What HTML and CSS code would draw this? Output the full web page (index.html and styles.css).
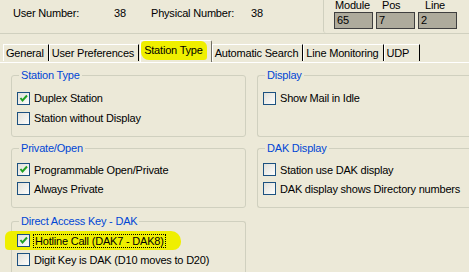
FILE: index.html
```html
<!DOCTYPE html>
<html lang="en">
<head>
    <meta charset="UTF-8">
    <title>Station Type</title>
    <link rel="stylesheet" href="styles.css">
</head>
<body>
    <div class="header">
        <div class="info">
            <span class="lbl-user">User Number:</span>
            <span class="val">38</span>
            <span class="lbl-phys">Physical Number:</span>
            <span>38</span>
        </div>
        <div class="module">
            <div class="mod-col">
                <span class="mod-lbl">Module</span>
                <span class="field">65</span>
            </div>
            <div class="mod-col">
                <span class="mod-lbl pos">Pos</span>
                <span class="field">7</span>
            </div>
            <div class="mod-col">
                <span class="mod-lbl line">Line</span>
                <span class="field">2</span>
            </div>
        </div>
    </div>

    <div class="tabs">
        <div class="tab">General</div>
        <div class="tab">User Preferences</div>
        <div class="tab active"><span class="mark">Station Type</span></div>
        <div class="tab">Automatic Search</div>
        <div class="tab">Line Monitoring</div>
        <div class="tab udp">UDP</div>
    </div>

    <div class="panel">
        <div class="group g1">
            <span class="group-title">Station Type</span>
            <div class="row"><span class="cb checked"><svg viewBox="0 0 11 11"><path d="M2.5 5 L4.5 7.5 L9 2.5"/></svg></span>Duplex Station</div>
            <div class="row"><span class="cb"></span>Station without Display</div>
        </div>
        <div class="group g1 right">
            <span class="group-title">Display</span>
            <div class="row"><span class="cb"></span>Show Mail in Idle</div>
        </div>

        <div class="group g2">
            <span class="group-title">Private/Open</span>
            <div class="row"><span class="cb checked"><svg viewBox="0 0 11 11"><path d="M2.5 5 L4.5 7.5 L9 2.5"/></svg></span>Programmable Open/Private</div>
            <div class="row"><span class="cb"></span>Always Private</div>
        </div>
        <div class="group g2 right">
            <span class="group-title">DAK Display</span>
            <div class="row"><span class="cb"></span>Station use DAK display</div>
            <div class="row"><span class="cb"></span>DAK display shows Directory numbers</div>
        </div>

        <div class="group g3">
            <span class="group-title">Direct Access Key - DAK</span>
            <div class="row hl"><span class="cb checked"><svg viewBox="0 0 11 11"><path d="M2.5 5 L4.5 7.5 L9 2.5"/></svg></span><span class="focus">Hotline Call (DAK7 - DAK8)</span></div>
            <div class="row"><span class="cb"></span>Digit Key is DAK (D10 moves to D20)</div>
        </div>
    </div>
</body>
</html>
```

FILE: styles.css
```css
html, body {
    margin: 0;
    height: 100%;
    overflow: hidden;
}
body {
    background: #ece9d8;
    font-family: "Liberation Sans", Arial, sans-serif;
    font-size: 11px;
    letter-spacing: -0.2px;
    color: #000;
}

/* header strip */
.header {
    display: flex;
    height: 33px;
    border-bottom: 1px solid #d0d0bf;
}
.info {
    display: flex;
    align-items: center;
    height: 26px;
    padding-left: 13px;
}
.lbl-user {
    width: 101px;
}
.val {
    width: 37px;
}
.lbl-phys {
    width: 100px;
}
.module {
    margin-left: auto;
    width: 135px;
    display: flex;
    gap: 3px;
    padding-left: 10px;
    border-left: 1px solid #d0d0bf;
    border-bottom-left-radius: 3px;
}
.mod-col {
    display: flex;
    flex-direction: column;
    width: 39px;
}
.mod-lbl {
    height: 12px;
    line-height: 11px;
    padding-left: 1px;
}
.mod-lbl.pos {
    padding-left: 6px;
}
.mod-lbl.line {
    padding-left: 7px;
}
.field {
    height: 15px;
    line-height: 15px;
    border: 1px solid #3f3f3f;
    background: #aeab9c;
    padding-left: 2px;
}

/* tabs */
.tabs {
    display: flex;
    align-items: flex-end;
    height: 22px;
    margin-top: 6px;
    padding-left: 3px;
}
.tab {
    height: 16px;
    line-height: 16px;
    padding: 0 4px 0 2px;
    border-top: 1px solid #fff;
    border-left: 1px solid #fff;
    border-right: 1px solid #000;
    margin-bottom: 1px;
    white-space: nowrap;
}
.tab.udp {
    padding-right: 10px;
}
.tab.active {
    height: 21px;
    line-height: 19px;
    margin-bottom: 0;
    margin-left: 1px;
    padding: 0 4px 0 0;
    border-top-left-radius: 2px;
    border-top-right-radius: 2px;
    border-right-color: #716f64;
}
.mark {
    display: inline-block;
    background: #efef00;
    border-radius: 4px 6px 3px 8px;
    padding: 0 4px 1px 3px;
    line-height: 18px;
}

/* panel */
.panel {
    border-top: 1px solid #fff;
    padding: 12px 0 0 11px;
    display: grid;
    grid-template-columns: 235px 1fr;
    grid-template-rows: 62px 60px 60px;
    column-gap: 11px;
    row-gap: 11px;
}
.group {
    position: relative;
    border: 1px solid #d0d0bf;
    border-radius: 3px;
    padding: 12px 0 0 5px;
}
.group.right {
    border-right: none;
    border-radius: 3px 0 0 3px;
}
.g2 {
    padding-top: 11px;
}
.g3 {
    margin-top: 2px;
    padding-top: 9px;
    border-bottom: none;
}
.group-title {
    position: absolute;
    top: -7px;
    left: 7px;
    padding: 0 2px;
    background: #ece9d8;
    color: #0046d5;
    line-height: 13px;
}
.row {
    display: flex;
    align-items: center;
    height: 19px;
    white-space: nowrap;
}
.g1 .row {
    height: 20px;
}
.cb {
    width: 11px;
    height: 11px;
    border: 1px solid #1c5180;
    background: linear-gradient(135deg, #e1e0d9, #fdfdfc);
    margin-right: 4px;
    flex: none;
}
.cb svg {
    display: block;
    width: 11px;
    height: 11px;
    fill: none;
    stroke: #21a121;
    stroke-width: 2;
}
.row.hl {
    align-self: start;
    display: inline-flex;
    margin-left: -12px;
    padding: 0 16px 0 12px;
    background: #efef00;
    border-radius: 6px 10px 8px 4px;
}
.focus {
    outline: 1px dotted #000;
    outline-offset: 0;
    padding: 0 1px;
}
```
